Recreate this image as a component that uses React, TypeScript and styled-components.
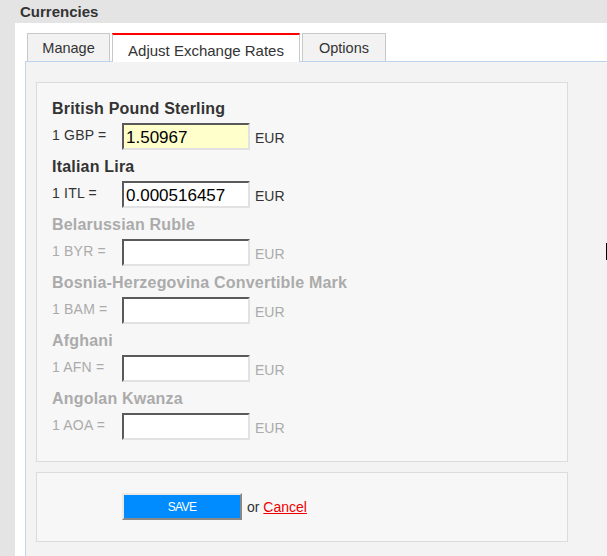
import React from "react";
import styled, { createGlobalStyle } from "styled-components";

const Global = createGlobalStyle`
  html, body { margin: 0; padding: 0; }
  body {
    background: #e4e4e4;
    font-family: "Liberation Sans", Arial, sans-serif;
    color: #333;
    overflow: hidden;
  }
`;

const Page = styled.div`
  position: relative;
  display: flex;
  flex-direction: column;
  min-height: 100vh;
`;

const Header = styled.div`
  height: 23px;
  line-height: 23px;
  padding-left: 20px;
  font-size: 15px;
  font-weight: bold;
  color: #333;
`;

const Main = styled.div`
  flex: 1;
  margin-left: 15px;
  background: #fff;
  padding: 10px 0 0 10px;
  display: flex;
  flex-direction: column;
`;

const TabBar = styled.div`
  display: flex;
  align-items: flex-end;
  gap: 2px;
  margin-left: 2px;
  position: relative;
  z-index: 1;
`;

const Tab = styled.div<{ $active?: boolean; $w: number }>`
  box-sizing: border-box;
  width: ${(p) => p.$w}px;
  border: 1px solid #c8c8c8;
  border-bottom: none;
  text-align: center;
  color: #333;
  ${(p) =>
    p.$active
      ? `
    border-top: 2px solid #f00;
    background: #fff;
    height: 29px;
    margin-bottom: -1px;
    font-size: 15px;
    line-height: 27px;
    padding-top: 2px;
  `
      : `
    background: #f2f2f2;
    height: 28px;
    font-size: 14.5px;
    line-height: 28px;
  `}
`;

const Panel = styled.div`
  flex: 1;
  background: #f3f3f3;
  border-top: 1px solid #bcd5ec;
  border-left: 1px solid #bcd5ec;
  padding: 20px 0 0 10px;
`;

const Box = styled.div`
  box-sizing: border-box;
  width: 532px;
  background: #f7f7f7;
  border: 1px solid #dcdcdc;
`;

const RatesBox = styled(Box)`
  padding: 16px 0 21px 15px;
  display: flex;
  flex-direction: column;
  gap: 7px;
`;

const Group = styled.div<{ $dim?: boolean }>`
  color: ${(p) => (p.$dim ? "#ababab" : "#333")};
`;

const Title = styled.div`
  font-size: 16px;
  font-weight: bold;
  line-height: 20px;
  letter-spacing: 0.2px;
`;

const Row = styled.div`
  display: flex;
  align-items: flex-start;
  margin-top: 4px;
`;

const Label = styled.div`
  width: 70px;
  font-size: 14px;
  line-height: 16px;
  margin-top: 4px;
  letter-spacing: 0.2px;
`;

const RateInput = styled.input<{ $hl?: boolean }>`
  box-sizing: border-box;
  width: 128px;
  height: 27px;
  margin: 0;
  padding: 2px 2px 0 2px;
  font-family: "Liberation Sans", Arial, sans-serif;
  font-size: 17px;
  color: #000;
  background: ${(p) => (p.$hl ? "#ffffcc" : "#fff")};
  border-width: 2px;
  border-style: solid;
  border-color: #5a5a5a #e2e2e2 #e2e2e2 #5a5a5a;
  outline: none;
`;

const Unit = styled.div`
  font-size: 14px;
  line-height: 16px;
  margin: 7px 0 0 5px;
`;

const SaveBox = styled(Box)`
  margin-top: 10px;
  padding: 20px 0 21px 85px;
  display: flex;
  align-items: center;
  font-size: 14px;
  color: #333;
`;

const SaveButton = styled.button`
  box-sizing: border-box;
  width: 120px;
  height: 27px;
  margin: 0;
  padding: 0;
  background: #008cff;
  color: #fff;
  font-family: "Liberation Sans", Arial, sans-serif;
  font-size: 12px;
  letter-spacing: -0.6px;
  border-width: 2px;
  border-style: solid;
  border-color: #ebe9e4 #888 #888 #ebe9e4;
`;

const Or = styled.span`
  margin-left: 5px;
`;

const CancelLink = styled.a`
  color: #e00;
  text-decoration: underline;
`;

const Caret = styled.div`
  position: absolute;
  left: 606px;
  top: 243px;
  width: 1px;
  height: 17px;
  background: #000;
`;

const rates = [
  { name: "British Pound Sterling", code: "GBP", value: "1.50967", hl: true },
  { name: "Italian Lira", code: "ITL", value: "0.000516457" },
  { name: "Belarussian Ruble", code: "BYR", value: "", dim: true },
  { name: "Bosnia-Herzegovina Convertible Mark", code: "BAM", value: "", dim: true },
  { name: "Afghani", code: "AFN", value: "", dim: true },
  { name: "Angolan Kwanza", code: "AOA", value: "", dim: true },
];

export default function App() {
  return (
    <Page>
      <Global />
      <Header>Currencies</Header>
      <Main>
        <TabBar>
          <Tab $w={83}>Manage</Tab>
          <Tab $w={188} $active>
            Adjust Exchange Rates
          </Tab>
          <Tab $w={84}>Options</Tab>
        </TabBar>
        <Panel>
          <RatesBox>
            {rates.map((r) => (
              <Group key={r.code} $dim={r.dim}>
                <Title>{r.name}</Title>
                <Row>
                  <Label>1 {r.code} =</Label>
                  <RateInput $hl={r.hl} defaultValue={r.value} />
                  <Unit>EUR</Unit>
                </Row>
              </Group>
            ))}
          </RatesBox>
          <SaveBox>
            <SaveButton>SAVE</SaveButton>
            <Or>
              or <CancelLink href="#">Cancel</CancelLink>
            </Or>
          </SaveBox>
        </Panel>
      </Main>
      <Caret />
    </Page>
  );
}
